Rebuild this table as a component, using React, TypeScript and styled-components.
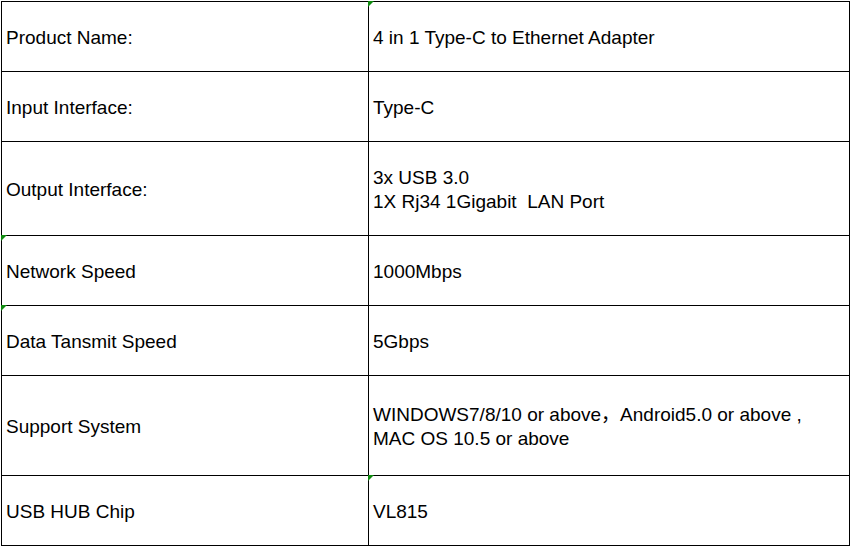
import React from 'react'
import styled, { createGlobalStyle } from 'styled-components'

interface Spec {
  label: string
  value: string[]
  height: number
  labelMark?: boolean
  valueMark?: boolean
}

const specs: Spec[] = [
  { label: 'Product Name:', value: ['4 in 1 Type-C to Ethernet Adapter'], height: 70, valueMark: true },
  { label: 'Input Interface:', value: ['Type-C'], height: 70 },
  { label: 'Output Interface:', value: ['3x USB 3.0', '1X Rj34 1Gigabit  LAN Port'], height: 94 },
  { label: 'Network Speed', value: ['1000Mbps'], height: 70, labelMark: true },
  { label: 'Data Tansmit Speed', value: ['5Gbps'], height: 70, labelMark: true },
  {
    label: 'Support System',
    value: ['WINDOWS7/8/10 or above，Android5.0 or above ,', 'MAC OS 10.5 or above'],
    height: 100,
  },
  { label: 'USB HUB Chip', value: ['VL815'], height: 70, valueMark: true },
]

const GlobalStyle = createGlobalStyle`
  html, body {
    margin: 0;
    padding: 0;
    background: #ffffff;
  }
  body {
    font-family: "Liberation Sans", Arial, "Noto Sans CJK SC", sans-serif;
    color: #000000;
  }
`

const Sheet = styled.div`
  margin: 1px 0 0 1px;
  width: 848px;
  border-top: 1px solid #000;
  border-left: 1px solid #000;
`

const Row = styled.div<{ $height: number }>`
  display: grid;
  grid-template-columns: 367px 481px;
  height: ${({ $height }) => $height}px;
`

const Cell = styled.div<{ $marked?: boolean }>`
  position: relative;
  display: flex;
  flex-direction: column;
  justify-content: center;
  padding: 2px 0 0 4px;
  border-right: 1px solid #000;
  border-bottom: 1px solid #000;
  font-size: 19px;
  line-height: 24px;
  white-space: pre;

  &::before {
    content: '';
    display: ${({ $marked }) => ($marked ? 'block' : 'none')};
    position: absolute;
    top: -1px;
    left: -1px;
    width: 0;
    height: 0;
    border-top: 6px solid #108a10;
    border-right: 6px solid transparent;
  }
`

const Line = styled.span`
  display: block;
`

export default function App() {
  return (
    <>
      <GlobalStyle />
      <Sheet>
        {specs.map((spec) => (
          <Row key={spec.label} $height={spec.height}>
            <Cell $marked={spec.labelMark}>
              <Line>{spec.label}</Line>
            </Cell>
            <Cell $marked={spec.valueMark}>
              {spec.value.map((line) => (
                <Line key={line}>{line}</Line>
              ))}
            </Cell>
          </Row>
        ))}
      </Sheet>
    </>
  )
}
